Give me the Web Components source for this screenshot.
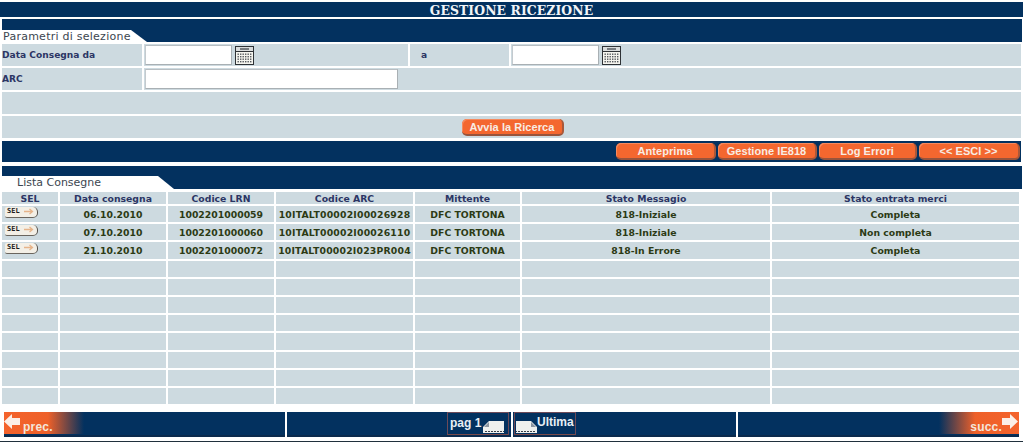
<!DOCTYPE html>
<html lang="it">
<head>
<meta charset="utf-8">
<title>Gestione Ricezione</title>
<style>
html, body { margin: 0; padding: 0; background: #fff; }
body { width: 1023px; height: 442px; overflow: hidden; font-family: "DejaVu Sans", sans-serif; }
</style>
</head>
<body>
<gr-page>
  <gr-title>GESTIONE RICEZIONE</gr-title>
  <gr-section label="Parametri di selezione"></gr-section>
  <gr-filters>
    <gr-button slot="search" width="102">Avvia la Ricerca</gr-button>
  </gr-filters>
  <gr-actions>
    <gr-button width="100">Anteprima</gr-button>
    <gr-button width="99">Gestione IE818</gr-button>
    <gr-button width="98">Log Errori</gr-button>
    <gr-button width="101">&lt;&lt; ESCI &gt;&gt;</gr-button>
  </gr-actions>
  <gr-section label="Lista Consegne" second></gr-section>
  <gr-table></gr-table>
  <gr-footer></gr-footer>
</gr-page>

<script>
class GrPage extends HTMLElement {
    constructor() {
        super();
        this.attachShadow({ mode: 'open' });
        this.shadowRoot.innerHTML = `
            <style>
            :host { display: flex; flex-direction: column; width: 1023px; height: 442px; padding-top: 2px; box-sizing: border-box; border-bottom: 1px solid #20303c; }
            </style>
            <slot></slot>
        `;
    }
}

class GrTitle extends HTMLElement {
    constructor() {
        super();
        this.attachShadow({ mode: 'open' });
        this.shadowRoot.innerHTML = `
            <style>
            :host {
                display: block;
                height: 15px;
                background: #03315f;
                color: #f2f5f8;
                text-align: center;
                font: bold 12.4px/17px "DejaVu Serif", serif;
                letter-spacing: .1px;
            }
            </style>
            <slot></slot>
        `;
    }
}

class GrSection extends HTMLElement {
    constructor() {
        super();
        this.attachShadow({ mode: 'open' });
        this.shadowRoot.innerHTML = `
            <style>
            :host {
                display: block;
                margin: 2px 1px 2px 2px;
                height: 23px;
                background: #03315f;
                position: relative;
            }
            :host([second]) { margin-top: 4px; margin-bottom: 3px; }
            .tab {
                position: absolute;
                left: 0; bottom: 0;
                height: 12px;
                width: 145px;
                background: #fff;
                clip-path: polygon(0 0, 129px 0, 145px 100%, 0 100%);
                color: #3c4650;
                font: 11px/14px "DejaVu Sans", sans-serif;
                letter-spacing: .25px;
                padding-left: 1px;
                box-sizing: border-box;
                white-space: nowrap;
            }
            :host([second]) .tab { height: 13px; width: 172px; padding-left: 15px; clip-path: polygon(0 0, 156px 0, 172px 100%, 0 100%); letter-spacing: 0; }
            </style>
            <div class="tab"></div>
        `;
        this.shadowRoot.querySelector('.tab').textContent = this.getAttribute('label');
    }
}

class GrCalendar extends HTMLElement {
    constructor() {
        super();
        this.attachShadow({ mode: 'open' });
        let dots = '';
        for (let r = 0; r < 4; r++) {
            for (let c = 0; c < 6; c++) {
                dots += `<rect x="${2.5 + c * 2.5}" y="${7.5 + r * 2.5}" width="1.4" height="1.4" fill="#55585c"/>`;
            }
        }
        this.shadowRoot.innerHTML = `
            <style>
            :host { display: block; width: 19px; height: 19px; }
            svg { display: block; }
            </style>
            <svg width="19" height="19" viewBox="0 0 19 19">
              <rect x=".5" y=".5" width="18" height="18" fill="#f4f4ee" stroke="#2e3236"/>
              <rect x="1" y="1" width="17" height="4.5" fill="#d9dcdc"/>
              <line x1="1" y1="5.5" x2="18" y2="5.5" stroke="#2e3236"/>
              <rect x="5" y="2" width="9" height="2" fill="#777c80"/>
              ${dots}
            </svg>
        `;
    }
}

class GrField extends HTMLElement {
    constructor() {
        super();
        this.attachShadow({ mode: 'open' });
        this.shadowRoot.innerHTML = `
            <style>
            :host { display: block; }
            input {
                display: block;
                box-sizing: border-box;
                width: 100%;
                height: 100%;
                margin: 0;
                padding: 0 2px;
                background: #fff;
                border: 1px solid #a9b0b4;
                border-top-color: #b8bec2;
                border-left-color: #c4cace;
                outline: none;
            }
            </style>
            <input type="text">
        `;
    }
}

class GrFilters extends HTMLElement {
    constructor() {
        super();
        this.attachShadow({ mode: 'open' });
        this.shadowRoot.innerHTML = `
            <style>
            :host { display: block; margin: 0 2px 0 2px; }
            .rows { display: flex; flex-direction: column; gap: 2px; }
            .row { display: flex; gap: 2px; height: 22px; }
            .cell { background: #cddae0; display: flex; align-items: center; box-sizing: border-box; }
            .label { font: bold 9.1px/1 "DejaVu Sans", sans-serif; color: #2b3564; padding-top: 2px; }
            .w1 { width: 140px; }
            .w2 { width: 264px; }
            .w3 { width: 99px; padding-left: 11px; }
            .grow { flex: 1; }
            .date { gap: 3px; }
            gr-field.date-in { width: 87px; height: 20px; margin-left: 1px; }
            gr-field.arc { width: 253px; height: 20px; margin-left: 1px; }
            .search { justify-content: center; }
            .search-in { padding-left: 3px; display: flex; }
            </style>
            <div class="rows">
              <div class="row">
                <div class="cell label w1">Data Consegna da</div>
                <div class="cell date w2"><gr-field class="date-in"></gr-field><gr-calendar></gr-calendar></div>
                <div class="cell label w3">a</div>
                <div class="cell date grow"><gr-field class="date-in"></gr-field><gr-calendar></gr-calendar></div>
              </div>
              <div class="row">
                <div class="cell label w1">ARC</div>
                <div class="cell grow"><gr-field class="arc"></gr-field></div>
              </div>
              <div class="row"><div class="cell grow"></div></div>
              <div class="row"><div class="cell grow search"><div class="search-in"><slot name="search"></slot></div></div></div>
            </div>
        `;
    }
}

class GrButton extends HTMLElement {
    constructor() {
        super();
        this.attachShadow({ mode: 'open' });
        this.shadowRoot.innerHTML = `
            <style>
            :host {
                display: block;
                height: 17px;
                box-sizing: border-box;
                border-radius: 5px;
                background: #f4672f;
                border-right: 2px solid #a9583a;
                border-bottom: 2px solid #98543c;
                box-shadow: inset 1px 1px 0 #f58a5e;
                color: #f8ece4;
                text-align: center;
                font: bold 11px/16px "Liberation Sans", sans-serif;
                letter-spacing: .05px;
                white-space: nowrap;
            }
            </style>
            <slot></slot>
        `;
        this.style.width = this.getAttribute('width') + 'px';
    }
}

class GrActions extends HTMLElement {
    constructor() {
        super();
        this.attachShadow({ mode: 'open' });
        this.shadowRoot.innerHTML = `
            <style>
            :host {
                display: flex;
                justify-content: flex-end;
                align-items: center;
                gap: 2px;
                height: 21px;
                margin: 3px 2px 0 2px;
                padding-right: 1px;
                background: #03315f;
            }
            </style>
            <slot></slot>
        `;
    }
}

class GrSelButton extends HTMLElement {
    constructor() {
        super();
        this.attachShadow({ mode: 'open' });
        this.shadowRoot.innerHTML = `
            <style>
            :host {
                display: flex;
                align-items: center;
                width: 33px;
                height: 11px;
                box-sizing: border-box;
                margin: 0 0 4px 3px;
                padding-left: 2px;
                gap: 4px;
                background: #f3efe6;
                border-radius: 2px 5px 5px 2px;
                border-right: 1px solid #55504a;
                border-bottom: 1px solid #6a655e;
                color: #1c1c22;
                font: bold 7px/9px "DejaVu Sans Mono", monospace;
            }
            svg { display: block; flex: none; }
            </style>
            <span>SEL</span>
            <svg width="10" height="7" viewBox="0 0 10 7"><path d="M0 3.5H8M5.5 1L8.5 3.5L5.5 6" fill="none" stroke="#e6b48a" stroke-width="1.3"/></svg>
        `;
    }
}

class GrTable extends HTMLElement {
    constructor() {
        super();
        this.attachShadow({ mode: 'open' });
        const head = ['SEL', 'Data consegna', 'Codice LRN', 'Codice ARC', 'Mittente', 'Stato Messagio', 'Stato entrata merci'];
        const rows = [
            ['06.10.2010', '1002201000059', '10ITALT00002I00026928', 'DFC TORTONA', '818-Iniziale', 'Completa'],
            ['07.10.2010', '1002201000060', '10ITALT00002I00026110', 'DFC TORTONA', '818-Iniziale', 'Non completa'],
            ['21.10.2010', '1002201000072', '10ITALT00002I023PR004', 'DFC TORTONA', '818-In Errore', 'Completa']
        ];
        let html = head.map(h => `<div class="th">${h}</div>`).join('');
        for (let i = 0; i < 11; i++) {
            if (rows[i]) {
                html += `<div class="td sel"><gr-sel-button></gr-sel-button></div>`;
                html += rows[i].map((t, c) => `<div class="td${c === 2 ? ' arc' : ''}">${t}</div>`).join('');
            } else {
                html += '<div class="td"></div>'.repeat(7);
            }
        }
        this.shadowRoot.innerHTML = `
            <style>
            :host { display: block; margin: 0 4px 0 2px; }
            .grid {
                display: grid;
                grid-template-columns: 56px 106px 106px 137px 105px 248px 1fr;
                grid-template-rows: 12px repeat(11, 16.2px);
                gap: 2px;
            }
            .th, .td {
                background: #cddae0;
                text-align: center;
                white-space: nowrap;
                overflow: hidden;
                display: flex;
                align-items: center;
                justify-content: center;
                font-family: "DejaVu Sans", sans-serif;
                font-weight: bold;
                font-size: 9.3px;
            }
            .th { color: #2b3564; }
            .td { color: #2c3a14; }
            .arc { letter-spacing: .2px; }
            .sel { justify-content: flex-start; }
            </style>
            <div class="grid">${html}</div>
        `;
    }
}

class GrFooter extends HTMLElement {
    constructor() {
        super();
        this.attachShadow({ mode: 'open' });
        const page = `<svg width="22" height="14" viewBox="0 0 22 14">
              <path d="M6 1H21V13H0V7Z" fill="#eef0ee"/>
              <path d="M1 7L6 2V7Z" fill="#8a94a0"/>
              <path d="M2 11.5H21" stroke="#3a4048" stroke-dasharray="2 1"/>
            </svg>`;
        this.shadowRoot.innerHTML = `
            <style>
            :host {
                display: grid;
                grid-template-columns: 281px 1fr 281px;
                gap: 2px;
                height: 25px;
                margin: 8px 4px 0 4px;
            }
            .cell { background: linear-gradient(#03315f 23px, #0b2a4d 23px); display: flex; min-width: 0; }
            .nav {
                width: 80px;
                height: 22px;
                display: flex;
                box-sizing: border-box;
                color: #f4e6dc;
                font: bold 12px/1 "Liberation Sans", sans-serif;
                letter-spacing: .2px;
            }
            .prev { background: linear-gradient(90deg, #f4632c 0, #ee6029 55%, #03315f 100%); gap: 3px; }
            .next { background: linear-gradient(270deg, #f4632c 0, #ee6029 55%, #03315f 100%); justify-content: flex-end; gap: 0; padding-right: 1px; }
            .nav span { padding-top: 9px; }
            .nav svg { display: block; margin-top: 2px; flex: none; }
            .right { justify-content: flex-end; }
            .middle { justify-content: center; gap: 2px; background: none; }
            .half { flex: 1; display: flex; background: #03315f; border-bottom: 2px solid #0b2a4d; }
            .half.l { justify-content: flex-end; padding-right: 2px; }
            .half.r { padding-left: 1px; }
            .pg {
                display: flex;
                align-items: flex-start;
                width: 62px;
                height: 23px;
                box-sizing: border-box;
                border: 1px solid #6d4a58;
                border-bottom-color: #7a4a4a;
                color: #e8eef4;
                font: bold 12px/21px "Liberation Sans", sans-serif;
                white-space: nowrap;
            }
            .pg svg { display: block; margin-top: 7px; flex: none; }
            .pg.a { padding-left: 2px; gap: 2px; }
            .pg.b { line-height: 19px; }
            .pg.b svg { transform: scaleX(-1); }
            </style>
            <div class="cell">
              <div class="nav prev">
                <svg width="16" height="15" viewBox="0 0 16 15"><path d="M0 7.5L8 0V4H16V11H8V15Z" fill="#fbefe8"/></svg>
                <span>prec.</span>
              </div>
            </div>
            <div class="cell middle">
              <div class="half l"><div class="pg a">pag 1${page}</div></div>
              <div class="half r"><div class="pg b">${page}Ultima</div></div>
            </div>
            <div class="cell right">
              <div class="nav next">
                <span>succ.</span>
                <svg width="16" height="15" viewBox="0 0 16 15"><path d="M16 7.5L8 0V4H0V11H8V15Z" fill="#fbefe8"/></svg>
              </div>
            </div>
        `;
    }
}

customElements.define('gr-page', GrPage);
customElements.define('gr-title', GrTitle);
customElements.define('gr-section', GrSection);
customElements.define('gr-calendar', GrCalendar);
customElements.define('gr-field', GrField);
customElements.define('gr-filters', GrFilters);
customElements.define('gr-button', GrButton);
customElements.define('gr-actions', GrActions);
customElements.define('gr-sel-button', GrSelButton);
customElements.define('gr-table', GrTable);
customElements.define('gr-footer', GrFooter);
</script>
</body>
</html>
